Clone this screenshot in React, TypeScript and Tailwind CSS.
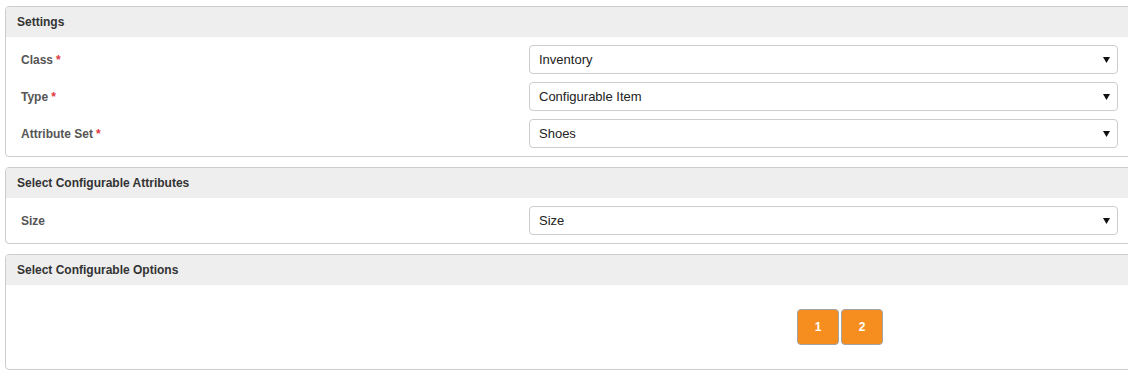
import React from "react";

const Arrow = () => (
  <svg width="7" height="7" viewBox="0 0 7 7" className="block">
    <path d="M0 1 H7 L3.5 7 Z" fill="#111" />
  </svg>
);

const FakeSelect = ({ value }: { value: string }) => (
  <div className="w-[589px] h-[29px] border border-[#ccc] rounded-[4px] bg-white flex items-center justify-between pl-[9px] pr-[7px] text-[13px] text-[#222]">
    <span>{value}</span>
    <Arrow />
  </div>
);

const Row = ({ label, required, value }: { label: string; required?: boolean; value: string }) => (
  <div className="flex items-center">
    <div className="w-[523px] pl-[15px] text-[12px] font-bold text-[#555]">
      {label}
      {required && <span className="text-[#e0393e] ml-[3px]">*</span>}
    </div>
    <FakeSelect value={value} />
  </div>
);

const Panel = ({ title, children }: { title: string; children: React.ReactNode }) => (
  <div className="w-[1130px] border border-[#ccc] rounded-[4px] overflow-hidden bg-white mb-[10px]">
    <div className="h-[30px] bg-[#eee] pl-[11px] flex items-center text-[12px] font-bold text-[#333]">
      {title}
    </div>
    {children}
  </div>
);

export default function App() {
  return (
    <div
      className="w-[1128px] h-[376px] overflow-hidden bg-white pt-[6px] pl-[5px]"
      style={{ fontFamily: '"Liberation Sans", Arial, sans-serif' }}
    >
      <Panel title="Settings">
        <div className="flex flex-col gap-[8px] pt-[8px] pb-[8px]">
          <Row label="Class" required value="Inventory" />
          <Row label="Type" required value="Configurable Item" />
          <Row label="Attribute Set" required value="Shoes" />
        </div>
      </Panel>
      <Panel title="Select Configurable Attributes">
        <div className="flex flex-col pt-[8px] pb-[8px]">
          <Row label="Size" value="Size" />
        </div>
      </Panel>
      <Panel title="Select Configurable Options">
        <div className="h-[84px] flex items-start pt-[24px] pl-[791px] gap-[2px]">
          {["1", "2"].map((n) => (
            <button
              key={n}
              className="w-[42px] h-[36px] bg-[#f58e1f] border border-[#a3a3a3] rounded-[4px] text-white text-[12px] font-bold flex items-center justify-center"
            >
              {n}
            </button>
          ))}
        </div>
      </Panel>
    </div>
  );
}
